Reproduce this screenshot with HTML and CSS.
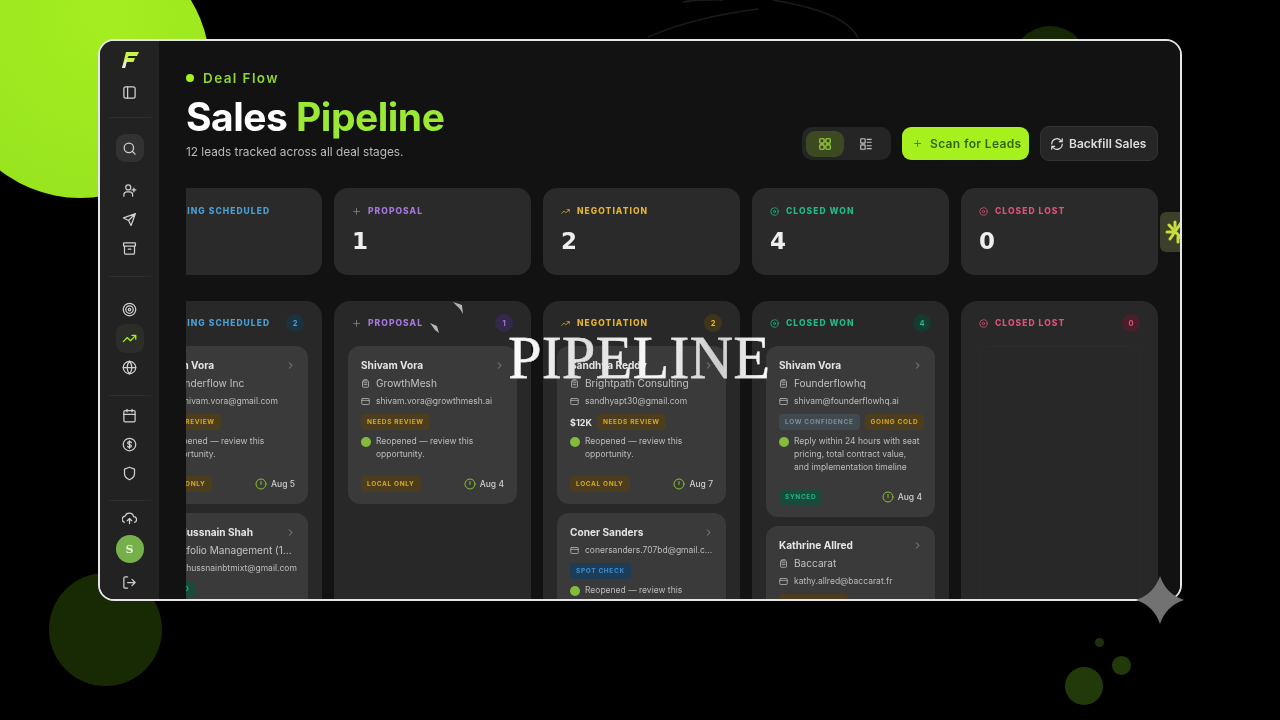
FILE: index.html
```html
<!DOCTYPE html>
<html lang="en">
<head>
<meta charset="utf-8">
<title>Sales Pipeline</title>
<link rel="stylesheet" href="styles.css">
</head>
<body>
<svg class="sprite" width="0" height="0" aria-hidden="true">
  <defs>
    <symbol id="i-panel" viewBox="0 0 24 24"><rect x="3" y="3" width="18" height="18" rx="3"/><path d="M9 3v18"/></symbol>
    <symbol id="i-search" viewBox="0 0 24 24"><circle cx="11" cy="11" r="7.500"/><path d="M21 21l-4.600-4.600"/></symbol>
    <symbol id="i-userplus" viewBox="0 0 24 24"><circle cx="10" cy="7" r="4"/><path d="M3 21v-2a5 5 0 0 1 5-5h4a5 5 0 0 1 5 5v2M19 8v6M16 11h6"/></symbol>
    <symbol id="i-send" viewBox="0 0 24 24"><path d="M21.500 2.500 2.500 9.500l8 4 4 8zM10.500 13.500l11-11"/></symbol>
    <symbol id="i-archive" viewBox="0 0 24 24"><rect x="2.500" y="3" width="19" height="5" rx="1"/><path d="M4 8v11a2 2 0 0 0 2 2h12a2 2 0 0 0 2-2V8M10 13h4"/></symbol>
    <symbol id="i-target" viewBox="0 0 24 24"><circle cx="12" cy="12" r="10"/><circle cx="12" cy="12" r="6"/><circle cx="12" cy="12" r="2"/></symbol>
    <symbol id="i-trend" viewBox="0 0 24 24"><path d="M22 7l-8.500 8.500-5-5L2 17M16 7h6v6"/></symbol>
    <symbol id="i-globe" viewBox="0 0 24 24"><circle cx="12" cy="12" r="10"/><path d="M2 12h20M12 2a15 15 0 0 1 0 20M12 2a15 15 0 0 0 0 20"/></symbol>
    <symbol id="i-calendar" viewBox="0 0 24 24"><rect x="3" y="4" width="18" height="18" rx="2"/><path d="M8 2v4M16 2v4M3 10h18"/></symbol>
    <symbol id="i-dollar" viewBox="0 0 24 24"><circle cx="12" cy="12" r="10"/><path d="M15 9c-.5-1-1.500-1.500-3-1.500-1.800 0-3 1-3 2.200 0 3 6 1.600 6 4.600 0 1.200-1.200 2.200-3 2.200-1.500 0-2.500-.5-3-1.500M12 6v12"/></symbol>
    <symbol id="i-shield" viewBox="0 0 24 24"><path d="M12 22s8-3.500 8-10V5l-8-3-8 3v7c0 6.500 8 10 8 10z"/></symbol>
    <symbol id="i-cloud" viewBox="0 0 24 24"><path d="M4 18a5 5 0 0 1 1-9.800A7 7 0 0 1 18.500 9 4.600 4.600 0 0 1 20 18M12 12v8M8.500 15.500 12 12l3.500 3.500"/></symbol>
    <symbol id="i-logout" viewBox="0 0 24 24"><path d="M9 21H5a2 2 0 0 1-2-2V5a2 2 0 0 1 2-2h4M16 17l5-5-5-5M21 12H9"/></symbol>
    <symbol id="i-grid" viewBox="0 0 24 24"><rect x="3" y="3" width="7.500" height="7.500" rx="1.500"/><rect x="13.500" y="3" width="7.500" height="7.500" rx="1.500"/><rect x="3" y="13.500" width="7.500" height="7.500" rx="1.500"/><rect x="13.500" y="13.500" width="7.500" height="7.500" rx="1.500"/></symbol>
    <symbol id="i-rows" viewBox="0 0 24 24"><rect x="3" y="3" width="7.500" height="7.500" rx="1"/><rect x="3" y="13.500" width="7.500" height="7.500" rx="1"/><path d="M14 4h7M14 9h7M14 15h7M14 20h7"/></symbol>
    <symbol id="i-refresh" viewBox="0 0 24 24"><path d="M3 12a9 9 0 0 1 15.500-6.300L21 8M21 3v5h-5M21 12a9 9 0 0 1-15.500 6.300L3 16M3 21v-5h5"/></symbol>
    <symbol id="i-plus" viewBox="0 0 24 24"><path d="M12 4v16M4 12h16"/></symbol>
    <symbol id="i-clock" viewBox="0 0 24 24"><circle cx="12" cy="12" r="10"/><path d="M12 7v6"/></symbol>
    <symbol id="i-ring" viewBox="0 0 24 24"><circle cx="12" cy="12" r="10"/><circle cx="12" cy="12" r="3"/></symbol>
    <symbol id="i-chev" viewBox="0 0 24 24"><path d="M9 5l7 7-7 7"/></symbol>
    <symbol id="i-building" viewBox="0 0 24 24"><rect x="4" y="5" width="16" height="17" rx="2"/><path d="M8 2h8M8 10h8M8 15h8"/></symbol>
    <symbol id="i-mail" viewBox="0 0 24 24"><rect x="2" y="4" width="20" height="16" rx="2"/><path d="M2 9h20"/></symbol>
  </defs>
</svg>

<div class="stage">
  <span class="deco blob-main"></span>
  <span class="deco blob-low"></span>
  <span class="deco blob-top"></span>
  <span class="deco dot-a"></span>
  <span class="deco dot-b"></span>
  <span class="deco dot-c"></span>
  <svg class="deco arcs" width="240" height="40" viewBox="0 0 240 40"><path d="M0 37C30 24 70 14 110 9M35 2c15-3 30-2 40-2M125 0c45 8 75 18 85 38"/></svg>

  <div class="window">
    <nav class="sidebar">
      <div class="logo">
        <svg width="18" height="18" viewBox="0 0 18 18"><path class="logo-top" d="M5 1h13l-2 4H7.500L6.500 7H14l-1.500 4H5.500L4 17H1z"/><path class="logo-low" d="M4.500 8.500h1.800L4 17H1z"/></svg>
      </div>
      <div class="nav-item"><svg class="ico"><use href="#i-panel"/></svg></div>
      <hr class="nav-rule rule-a">
      <div class="nav-item nav-search"><svg class="ico"><use href="#i-search"/></svg></div>
      <div class="nav-group group-a">
        <div class="nav-item"><svg class="ico"><use href="#i-userplus"/></svg></div>
        <div class="nav-item"><svg class="ico"><use href="#i-send"/></svg></div>
        <div class="nav-item"><svg class="ico"><use href="#i-archive"/></svg></div>
      </div>
      <hr class="nav-rule rule-b">
      <div class="nav-group">
        <div class="nav-item"><svg class="ico"><use href="#i-target"/></svg></div>
        <div class="nav-item nav-active"><svg class="ico"><use href="#i-trend"/></svg></div>
        <div class="nav-item"><svg class="ico"><use href="#i-globe"/></svg></div>
      </div>
      <hr class="nav-rule rule-c">
      <div class="nav-group">
        <div class="nav-item"><svg class="ico"><use href="#i-calendar"/></svg></div>
        <div class="nav-item"><svg class="ico"><use href="#i-dollar"/></svg></div>
        <div class="nav-item"><svg class="ico"><use href="#i-shield"/></svg></div>
      </div>
      <hr class="nav-rule rule-d">
      <div class="nav-item nav-cloud"><svg class="ico"><use href="#i-cloud"/></svg></div>
      <div class="avatar">S</div>
      <div class="nav-item nav-out"><svg class="ico"><use href="#i-logout"/></svg></div>
    </nav>

    <main class="main">
      <header class="head">
        <div class="head-text">
          <div class="eyebrow"><span class="eyebrow-dot"></span>Deal Flow</div>
          <h1 class="title">Sales <span class="title-accent">Pipeline</span></h1>
          <p class="subtitle">12 leads tracked across all deal stages.</p>
        </div>
        <div class="actions">
          <div class="toggle">
            <span class="toggle-btn toggle-on"><svg class="ico ico-14"><use href="#i-grid"/></svg></span>
            <span class="toggle-btn"><svg class="ico ico-14"><use href="#i-rows"/></svg></span>
          </div>
          <button class="btn btn-scan"><svg class="ico ico-10"><use href="#i-plus"/></svg>Scan for Leads</button>
          <button class="btn btn-back"><svg class="ico ico-14"><use href="#i-refresh"/></svg>Backfill Sales</button>
        </div>
      </header>

      <section class="stats">
        <div class="stats-row">
          <div class="stat c-blue"><div class="label"><svg class="ico ico-10"><use href="#i-calendar"/></svg>MEETING SCHEDULED</div></div>
          <div class="stat c-purple"><div class="label"><svg class="ico ico-10"><use href="#i-plus"/></svg>PROPOSAL</div><div class="num">1</div></div>
          <div class="stat c-yellow"><div class="label"><svg class="ico ico-10"><use href="#i-trend"/></svg>NEGOTIATION</div><div class="num">2</div></div>
          <div class="stat c-green"><div class="label"><svg class="ico ico-10"><use href="#i-ring"/></svg>CLOSED WON</div><div class="num">4</div></div>
          <div class="stat c-red"><div class="label"><svg class="ico ico-10"><use href="#i-ring"/></svg>CLOSED LOST</div><div class="num">0</div></div>
        </div>
      </section>

      <section class="board">
        <div class="board-row">

          <div class="col c-blue">
            <div class="col-head"><div class="label"><svg class="ico ico-10"><use href="#i-calendar"/></svg>MEETING SCHEDULED</div><span class="count">2</span></div>
            <article class="card">
              <div class="card-name">Shivam Vora<svg class="ico chev"><use href="#i-chev"/></svg></div>
              <div class="card-co"><svg class="ico ico-9"><use href="#i-building"/></svg>Founderflow Inc</div>
              <div class="card-mail"><svg class="ico ico-9"><use href="#i-mail"/></svg>mr.shivam.vora@gmail.com</div>
              <div class="tags"><span class="tag t-amber">NEEDS REVIEW</span></div>
              <div class="note"><span class="note-dot"></span><span>Reopened — review this opportunity.</span></div>
              <div class="card-foot"><span class="tag t-amber">LOCAL ONLY</span><span class="date"><svg class="ico ico-12"><use href="#i-clock"/></svg>Aug 5</span></div>
            </article>
            <article class="card">
              <div class="card-name">Syed Hussnain Shah<svg class="ico chev"><use href="#i-chev"/></svg></div>
              <div class="card-co"><svg class="ico ico-9"><use href="#i-building"/></svg>Portfolio Management (1...</div>
              <div class="card-mail"><svg class="ico ico-9"><use href="#i-mail"/></svg>syedhussnainbtmixt@gmail.com</div>
              <div class="tags"><span class="tag t-teal">SYNCED</span></div>
            </article>
          </div>

          <div class="col c-purple">
            <div class="col-head"><div class="label"><svg class="ico ico-10"><use href="#i-plus"/></svg>PROPOSAL</div><span class="count">1</span></div>
            <article class="card">
              <div class="card-name">Shivam Vora<svg class="ico chev"><use href="#i-chev"/></svg></div>
              <div class="card-co"><svg class="ico ico-9"><use href="#i-building"/></svg>GrowthMesh</div>
              <div class="card-mail"><svg class="ico ico-9"><use href="#i-mail"/></svg>shivam.vora@growthmesh.ai</div>
              <div class="tags"><span class="tag t-amber">NEEDS REVIEW</span></div>
              <div class="note"><span class="note-dot"></span><span>Reopened — review this opportunity.</span></div>
              <div class="card-foot"><span class="tag t-amber">LOCAL ONLY</span><span class="date"><svg class="ico ico-12"><use href="#i-clock"/></svg>Aug 4</span></div>
            </article>
          </div>

          <div class="col c-yellow">
            <div class="col-head"><div class="label"><svg class="ico ico-10"><use href="#i-trend"/></svg>NEGOTIATION</div><span class="count">2</span></div>
            <article class="card">
              <div class="card-name">Sandhya Reddy<svg class="ico chev"><use href="#i-chev"/></svg></div>
              <div class="card-co"><svg class="ico ico-9"><use href="#i-building"/></svg>Brightpath Consulting</div>
              <div class="card-mail"><svg class="ico ico-9"><use href="#i-mail"/></svg>sandhyapt30@gmail.com</div>
              <div class="tags"><b class="amount">$12K</b><span class="tag t-amber">NEEDS REVIEW</span></div>
              <div class="note"><span class="note-dot"></span><span>Reopened — review this opportunity.</span></div>
              <div class="card-foot"><span class="tag t-amber">LOCAL ONLY</span><span class="date"><svg class="ico ico-12"><use href="#i-clock"/></svg>Aug 7</span></div>
            </article>
            <article class="card">
              <div class="card-name">Coner Sanders<svg class="ico chev"><use href="#i-chev"/></svg></div>
              <div class="card-mail"><svg class="ico ico-9"><use href="#i-mail"/></svg>conersanders.707bd@gmail.c...</div>
              <div class="tags"><span class="tag t-blue">SPOT CHECK</span></div>
              <div class="note"><span class="note-dot"></span><span>Reopened — review this opportunity.</span></div>
            </article>
          </div>

          <div class="col c-green">
            <div class="col-head"><div class="label"><svg class="ico ico-10"><use href="#i-ring"/></svg>CLOSED WON</div><span class="count">4</span></div>
            <article class="card">
              <div class="card-name">Shivam Vora<svg class="ico chev"><use href="#i-chev"/></svg></div>
              <div class="card-co"><svg class="ico ico-9"><use href="#i-building"/></svg>Founderflowhq</div>
              <div class="card-mail"><svg class="ico ico-9"><use href="#i-mail"/></svg>shivam@founderflowhq.ai</div>
              <div class="tags"><span class="tag t-slate">LOW CONFIDENCE</span><span class="tag t-amber">GOING COLD</span></div>
              <div class="note"><span class="note-dot"></span><span>Reply within 24 hours with seat pricing, total contract value, and implementation timeline</span></div>
              <div class="card-foot"><span class="tag t-teal">SYNCED</span><span class="date"><svg class="ico ico-12"><use href="#i-clock"/></svg>Aug 4</span></div>
            </article>
            <article class="card">
              <div class="card-name">Kathrine Allred<svg class="ico chev"><use href="#i-chev"/></svg></div>
              <div class="card-co"><svg class="ico ico-9"><use href="#i-building"/></svg>Baccarat</div>
              <div class="card-mail"><svg class="ico ico-9"><use href="#i-mail"/></svg>kathy.allred@baccarat.fr</div>
              <div class="tags"><span class="tag t-amber">NEEDS REVIEW</span></div>
            </article>
          </div>

          <div class="col c-red">
            <div class="col-head"><div class="label"><svg class="ico ico-10"><use href="#i-ring"/></svg>CLOSED LOST</div><span class="count">0</span></div>
            <div class="empty"></div>
          </div>

        </div>
      </section>
    </main>

    <div class="side-tab">
      <svg width="20" height="26" viewBox="0 0 20 26"><path d="M4 6l14 15M16 4 5 20M2 13h5M10 3v5M13 18v5" /></svg>
    </div>
  </div>

  <h2 class="overlay-title">PIPELINE</h2>
  <svg class="deco shards" width="40" height="40" viewBox="0 0 40 40"><path d="M26 2l9 3 1 9-3-5zM3 23l7 3 2 7-4-3z"/></svg>
  <svg class="deco sparkle" width="48" height="48" viewBox="0 0 48 48"><path d="M24 0Q30 18 48 24 30 30 24 48 18 30 0 24 18 18 24 0z"/></svg>
</div>
</body>
</html>
```

FILE: styles.css
```css
* { box-sizing: border-box; }

html, body { margin: 0; padding: 0; background: #000; }

.sprite { position: absolute; }

.stage {
  position: relative;
  width: 1280px;
  height: 720px;
  padding: 39px 98px;
  background: #000;
  overflow: hidden;
  font-family: Inter, "Liberation Sans", sans-serif;
  color: #ddd;
}

/* Decorative background pieces on the free canvas */
.deco { position: absolute; display: block; border-radius: 50%; }
.blob-main { left: -50px; top: -62px; width: 260px; height: 260px; background: radial-gradient(circle at 60% 30%, #a4ee20, #98e41f 80%); }
.blob-low { left: 49px; top: 573px; width: 113px; height: 113px; background: #172a04; }
.blob-top { left: 1012px; top: 26px; width: 76px; height: 76px; background: #152704; }
.dot-a { left: 1065px; top: 667px; width: 38px; height: 38px; background: #223a0a; }
.dot-b { left: 1112px; top: 656px; width: 19px; height: 19px; background: #223a0a; }
.dot-c { left: 1095px; top: 638px; width: 9px; height: 9px; background: #1f2f0c; }
.arcs { left: 648px; top: 0; border-radius: 0; fill: none; stroke: #1a1a1a; stroke-width: 1.500; }
.sparkle { left: 1136px; top: 576px; border-radius: 0; fill: #727272; }
.shards { left: 427px; top: 300px; border-radius: 0; fill: #b5b5b5; }

.window {
  position: relative;
  display: flex;
  width: 1084px;
  height: 562px;
  border: 2px solid #e6e6e6;
  border-radius: 16px;
  background: #111;
  overflow: hidden;
}

/* Video-frame softness of the reference */
.sidebar, .main { filter: blur(.7px); }

.ico {
  width: 15px;
  height: 15px;
  flex: none;
  fill: none;
  stroke: currentColor;
  stroke-width: 2;
  stroke-linecap: round;
  stroke-linejoin: round;
}
.ico-14 { width: 14px; height: 14px; }
.ico-12 { width: 12px; height: 12px; }
.ico-10 { width: 9px; height: 9px; }
.ico-9 { width: 9px; height: 9px; }

/* Sidebar */
.sidebar {
  width: 59px;
  flex: none;
  display: flex;
  flex-direction: column;
  align-items: center;
  background: #222;
  color: #cfcfcf;
}
.logo { height: 18px; margin-top: 10px; }
.logo-top { fill: #c7f34a; }
.logo-low { fill: #ededed; }
.nav-item {
  width: 28px;
  height: 29px;
  flex: none;
  display: flex;
  align-items: center;
  justify-content: center;
  border-radius: 9px;
}
.logo + .nav-item { margin-top: 9px; }
.nav-rule {
  width: 42px;
  height: 1px;
  flex: none;
  border: 0;
  background: #2e2e2e;
}
.rule-a { margin: 10px 0 16px; }
.rule-b { margin: 13px 0 18px; }
.rule-c { margin: 13px 0 5px; }
.rule-d { margin: 12px 0 6px; }
.nav-search { width: 28px; height: 28px; background: #323232; }
.group-a { margin-top: 14px; }
.nav-group { display: flex; flex-direction: column; align-items: center; }
.nav-active { background: #2b2d28; color: #a6f01e; }
.nav-cloud { height: 22px; }
.avatar {
  width: 28px;
  height: 28px;
  flex: none;
  margin-top: 6px;
  display: flex;
  align-items: center;
  justify-content: center;
  border-radius: 50%;
  background: #76b04a;
  color: #e6f3d6;
  font: 700 11px "DejaVu Serif", serif;
}
.nav-out { margin-top: 5px; }

/* Main */
.main {
  flex: 1;
  min-width: 0;
  display: flex;
  flex-direction: column;
  padding: 0 22px 0 27px;
  background: #121212;
}
.head { display: flex; justify-content: space-between; align-items: flex-start; padding-top: 28px; height: 147px; flex: none; }
.eyebrow {
  display: flex;
  align-items: center;
  gap: 9px;
  height: 18px;
  color: #8fd62f;
  font-size: 13.500px;
  font-weight: 600;
  letter-spacing: 1.400px;
}
.eyebrow-dot { width: 8px; height: 8px; margin-left: 0; border-radius: 50%; background: #a6f01e; }
.title {
  margin: 8px 0 0;
  font-size: 39px;
  line-height: 44px;
  font-weight: 700;
  letter-spacing: -.5px;
  color: #fff;
}
.title-accent { color: #9be835; }
.subtitle { margin: 6px 0 0; font-size: 11.800px; line-height: 14px; color: #b9b9b9; }

.actions { display: flex; align-items: center; gap: 11px; margin-top: 57px; }
.toggle { display: flex; align-items: center; width: 89px; height: 33px; margin-right: 0; padding: 0 4px; border-radius: 10px; background: #252525; }
.toggle-btn { display: flex; align-items: center; justify-content: center; width: 38px; height: 26px; border-radius: 9px; color: #c4c4c4; }
.toggle-btn + .toggle-btn { margin-left: 3px; }
.toggle-on { background: #3c4a22; color: #a4d83a; }
.btn {
  display: flex;
  align-items: center;
  height: 33px;
  border: 0;
  border-radius: 9px;
  font-family: Inter, "Liberation Sans", sans-serif;
  font-size: 12px;
  font-weight: 600;
  white-space: nowrap;
}
.btn-scan { width: 127px; padding: 0 6px 0 11px; gap: 8px; background: #a6f01e; color: #356410; letter-spacing: .35px; }
.btn-back { width: 118px; height: 35px; padding: 0 9px; gap: 5px; background: #262626; border: 1px solid #333; color: #ddd; }

/* Stats */
.stats { height: 87px; flex: none; overflow: hidden; }
.stats-row { display: grid; grid-template-columns: repeat(5, 197px); gap: 12px; margin-left: -61px; }
.stat { height: 87px; padding: 17px 18px; border-radius: 14px; background: #2a2a2a; }
.label {
  display: flex;
  align-items: center;
  gap: 7px;
  height: 12px;
  font-size: 8.500px;
  font-weight: 800;
  letter-spacing: 1.050px;
  white-space: nowrap;
}
.num { margin-top: 11px; font: 700 23px/26px "DejaVu Sans", sans-serif; color: #eee; }
.c-blue .label { color: #4a9fd6; }
.c-purple .label { color: #a678de; }
.c-yellow .label { color: #e4b62c; }
.c-green .label { color: #22bb88; }
.c-red .label { color: #dd5474; }
.c-purple .label .ico { color: #8a8a8a; }

/* Board */
.board { flex: 1; min-height: 0; margin-top: 26px; overflow: hidden; }
.board-row { display: grid; grid-template-columns: repeat(5, 197px); gap: 12px; margin-left: -61px; align-items: stretch; }
.col { height: 400px; padding: 16px 14px; border-radius: 16px; background: #282828; }
.col-head { display: flex; justify-content: space-between; align-items: center; height: 12px; padding: 0 4px; margin-bottom: 17px; }
.count { display: flex; align-items: center; justify-content: center; width: 18px; height: 18px; border-radius: 50%; font-size: 7.500px; font-weight: 700; }
.c-blue .count { background: #1d3240; color: #4a9fd6; }
.c-purple .count { background: #33294a; color: #a678de; }
.c-yellow .count { background: #40351a; color: #e4b62c; }
.c-green .count { background: #163a30; color: #22bb88; }
.c-red .count { background: #4a1f2a; color: #dd5474; }

.card { margin-bottom: 9px; padding: 12px 13px; border-radius: 12px; background: #3a3a3a; }
.card-name { display: flex; justify-content: space-between; align-items: center; height: 14px; font-size: 10.100px; font-weight: 700; color: #e4e4e4; white-space: nowrap; }
.chev { width: 9px; height: 9px; color: #a5a5a5; }
.card-co { display: flex; align-items: center; gap: 6px; height: 14px; margin-top: 4px; font-size: 10.100px; color: #c2c2c2; white-space: nowrap; }
.card-mail { display: flex; align-items: center; gap: 6px; height: 14px; margin-top: 4px; font-size: 8.500px; color: #bdbdbd; white-space: nowrap; }
.tags { display: flex; align-items: center; gap: 5px; height: 16px; margin-top: 6px; }
.amount { font-size: 9px; color: #e4e4e4; }
.tag { display: inline-flex; align-items: center; height: 16px; padding: 0 6px; border-radius: 4px; font-size: 6.500px; font-weight: 700; letter-spacing: .65px; white-space: nowrap; }
.t-amber { background: #4c3e1d; color: #d9a524; }
.t-teal { background: #1a4a3c; color: #22b585; }
.t-blue { background: #1d3c58; color: #3f8fd0; }
.t-slate { background: #3f4a50; color: #7f8d95; }
.note { display: flex; gap: 5px; margin-top: 5px; font-size: 8.500px; line-height: 13px; color: #bdbdbd; }
.note-dot { width: 10px; height: 10px; margin-top: 2px; flex: none; border-radius: 50%; background: #84bb3a; }
.card-foot { display: flex; justify-content: space-between; align-items: center; height: 16px; margin-top: 15px; }
.date { display: flex; align-items: center; gap: 4px; font-size: 8.500px; font-weight: 500; color: #cfcfcf; }
.date .ico { color: #86c22f; }
.empty { height: 400px; margin: 0 4px; border: 1px solid #2c2c2c; border-radius: 10px; }

/* Overlay pieces */
.side-tab {
  position: absolute;
  top: 171px;
  right: 0;
  width: 20px;
  height: 40px;
  display: flex;
  align-items: center;
  padding-left: 5px;
  overflow: hidden;
  border-radius: 6px 0 0 6px;
  background: #3c3f2a;
}
.side-tab svg { flex: none; fill: none; stroke: #c8dc3a; stroke-width: 3; stroke-linecap: round; }

.overlay-title {
  position: absolute;
  left: 508px;
  top: 323px;
  margin: 0;
  font: 400 60.500px/70px "Liberation Serif", serif;
  background: linear-gradient(90deg, #fff 0%, #ddd 30%, #fafafa 55%, #ccc 80%, #fff 100%);
  -webkit-background-clip: text;
  background-clip: text;
  -webkit-text-fill-color: transparent;
  -webkit-text-stroke: .3px #e4e4e4;
  white-space: nowrap;
}
```
